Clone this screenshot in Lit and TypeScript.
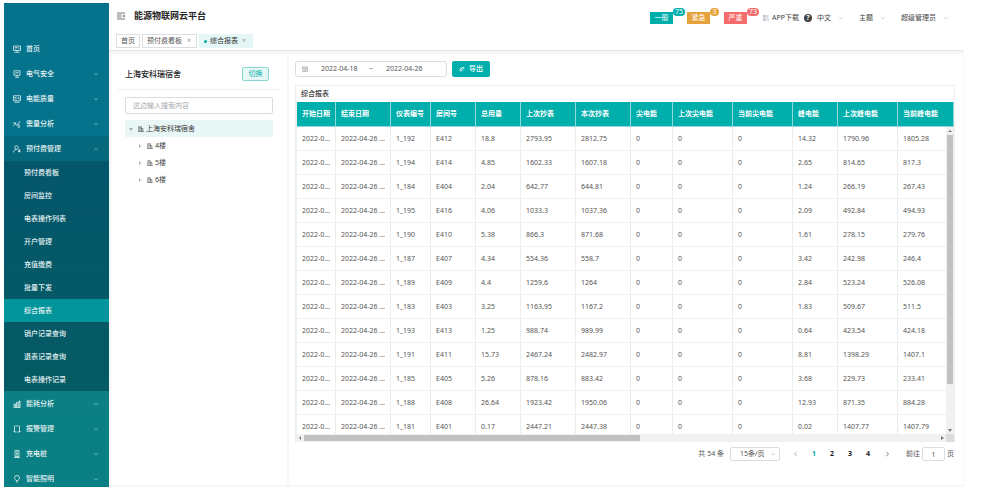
import { LitElement, html, css, svg } from "lit";
import { customElement, state } from "lit/decorators.js";
import { classMap } from "lit/directives/class-map.js";

const icons: Record<string, unknown> = {
  home: svg`<path d="M1 2h14v9H1zM3 14.500h10M8 11v3M4 5h5M4 8h3M11.500 5v3"/>`,
  safety: svg`<path d="M2 1.500h12v9H2zM8 10v4M4 14.500h8M5 7l2-3 2 3 2-3"/>`,
  quality: svg`<path d="M1 1.500h14v10H1zM3 14.500h10M3 5h4M3 8h4M9 8l2-3 2 3"/>`,
  demand: svg`<path d="M1 12l4-5 3 4 6-9M2 4a2 2 0 1 0 3 0M12 8v6M9 14h5"/>`,
  prepaid: svg`<circle cx="7" cy="5" r="3.500"/><path d="M1 15c0-4 3-6 6-6M10 10h5M10 13h5M12.500 9v6"/>`,
  energy: svg`<path d="M1 15h14M2 14V8h3v6M7 14V5h3v9M12 14V2h2v12"/>`,
  alarm: svg`<path d="M5 2H3v12h3M11 2h2v12h-3M1 13h3M12 13h3M6 2h4M7 14h2"/>`,
  charger: svg`<path d="M4 1h8v12H4zM2 15h12M6 4h4M6 7h4M6 10h4"/>`,
  light: svg`<path d="M8 1a5 5 0 0 0-5 5c0 2 2 3 3 5h4c1-2 3-3 3-5a5 5 0 0 0-5-5zM6 14h4"/>`,
  fold: svg`<path d="M0 2h16M0 6h9M0 10h9M0 14h16"/><path fill="currentColor" stroke="none" d="M15 5v6l-4-3z"/>`,
  qr: svg`<path d="M1 1h5v5H1zM10 1v6M13 1v3M1 10h5v5H1zM9 10h6M9 14h3M15 12v3"/>`,
  building: svg`<path d="M2 15V2h7v13M9 7h4v8M1 15h14M4 5h3M4 8h3M4 11h3"/>`,
  calendar: svg`<path d="M1 3h14v12H1zM1 7h14M5 1v3M11 1v3M4 10h8M4 12.500h8"/>`,
  clip: svg`<path stroke-width="2.500" d="M3 9l6-5c3-2 6 1 3 4l-6 5c-3 1-5-2-3-4l6-4"/>`,
  down: svg`<path d="M3 6l5 5 5-5"/>`,
  up: svg`<path d="M3 11l5-5 5 5"/>`,
};

const icon = (name: string, cls = "") =>
  html`<svg class="icon ${cls}" viewBox="0 0 16 16" aria-hidden="true">${icons[name]}</svg>`;

interface MenuEntry {
  label: string;
  icon: string;
  children?: string[];
  leaf?: boolean;
}

const MENU: MenuEntry[] = [
  { label: "首页", icon: "home", leaf: true },
  { label: "电气安全", icon: "safety" },
  { label: "电能质量", icon: "quality" },
  { label: "需量分析", icon: "demand" },
  {
    label: "预付费管理",
    icon: "prepaid",
    children: ["预付费看板", "房间监控", "电表操作列表", "开户管理", "充值缴费", "批量下发", "综合报表", "销户记录查询", "退表记录查询", "电表操作记录"],
  },
  { label: "能耗分析", icon: "energy" },
  { label: "报警管理", icon: "alarm" },
  { label: "充电桩", icon: "charger" },
  { label: "智能照明", icon: "light" },
];

const COLUMNS: [string, number][] = [
  ["开始日期", 39], ["结束日期", 55], ["仪表编号", 40], ["房间号", 45], ["总用量", 45], ["上次抄表", 55], ["本次抄表", 55],
  ["尖电能", 42], ["上次尖电能", 60], ["当前尖电能", 60], ["峰电能", 45], ["上次峰电能", 60], ["当前峰电能", 56],
];

const ROWS = [
  ["1_192", "E412", "18.8", "2793.95", "2812.75", "14.32", "1790.96", "1805.28"],
  ["1_194", "E414", "4.85", "1602.33", "1607.18", "2.65", "814.65", "817.3"],
  ["1_184", "E404", "2.04", "642.77", "644.81", "1.24", "266.19", "267.43"],
  ["1_195", "E416", "4.06", "1033.3", "1037.36", "2.09", "492.84", "494.93"],
  ["1_190", "E410", "5.38", "866.3", "871.68", "1.61", "278.15", "279.76"],
  ["1_187", "E407", "4.34", "554.36", "558.7", "3.42", "242.98", "246.4"],
  ["1_189", "E409", "4.4", "1259.6", "1264", "2.84", "523.24", "526.08"],
  ["1_183", "E403", "3.25", "1163.95", "1167.2", "1.83", "509.67", "511.5"],
  ["1_193", "E413", "1.25", "988.74", "989.99", "0.64", "423.54", "424.18"],
  ["1_191", "E411", "15.73", "2467.24", "2482.97", "8.81", "1398.29", "1407.1"],
  ["1_185", "E405", "5.26", "878.16", "883.42", "3.68", "229.73", "233.41"],
  ["1_188", "E408", "26.64", "1923.42", "1950.06", "12.93", "871.35", "884.28"],
  ["1_181", "E401", "0.17", "2447.21", "2447.38", "0.02", "1407.77", "1407.79"],
].map((r) => ["2022-0...", "2022-04-26 ...", ...r.slice(0, 5), "0", "0", "0", ...r.slice(5)]);

const base = css`
  * { box-sizing: border-box; }
  button, input, select { font: inherit; color: inherit; margin: 0; padding: 0; border: 0; background: none; border-radius: 0; min-width: 0; }
  a { color: inherit; text-decoration: none; }
  .icon { display: block; flex: none; width: 8px; height: 8px; fill: none; stroke: currentColor; stroke-width: 1.6; }
  .small { width: 6px; height: 6px; }
`;

@customElement("side-menu")
class SideMenu extends LitElement {
  static styles = [base, css`
    :host { display: block; overflow: hidden; padding-top: 33px; color: #e3f1f3; background: linear-gradient(#06738c, #06738c 30%, #0b8084 85%); }
    .entry { display: flex; align-items: center; gap: 5px; width: 100%; height: 25px; padding: 0 10px 0 9px; text-align: left; font-weight: 500; }
    .label { flex: 1; }
    .open { background: #05687d; }
    .arrow { width: 6px; height: 6px; opacity: 0.8; }
    .sub { background: linear-gradient(#04566b, #055b63); }
    .child { display: flex; align-items: center; height: 23px; padding-left: 20px; font-weight: 500; }
    .current { background: #02959b; }
  `];
  render() {
    return html`<nav>
      ${MENU.map((m) => html`
        <button class=${classMap({ entry: true, open: !!m.children })}>
          ${icon(m.icon)}<span class="label">${m.label}</span>
          ${m.leaf ? "" : icon(m.children ? "up" : "down", "arrow")}
        </button>
        ${m.children ? html`<div class="sub">${m.children.map((c) => html`
          <a href="#" class=${classMap({ child: true, current: c === "综合报表" })}>${c}</a>`)}</div>` : ""}
      `)}
    </nav>`;
  }
}

@customElement("top-bar")
class TopBar extends LitElement {
  static styles = [base, css`
    :host { display: block; height: 48px; background: #fff; border-bottom: 1px solid #e6e7e8; color: #444; }
    .bar { display: flex; align-items: center; height: 30px; padding: 0 15px 0 8px; }
    h1 { flex: 1; margin: 0 0 4px 9px; font-size: 9px; font-weight: 700; color: #222; white-space: nowrap; }
    .fold { margin-bottom: 4px; color: #555; }
    .alerts { display: flex; gap: 14px; margin-right: 16px; }
    .alert { position: relative; display: flex; align-items: center; justify-content: center; width: 23px; height: 12px; color: #fff; }
    .count { position: absolute; left: 23px; top: -4px; min-width: 9px; height: 8px; padding: 0 2px; border-radius: 4px; line-height: 8px; text-align: center; }
    .general, .general .count { background: #00aeab; }
    .urgent, .urgent .count { background: #e6a23c; }
    .severe, .severe .count { background: #f56c6c; }
    .app { display: flex; align-items: center; gap: 3px; }
    .app .icon { color: #8a93a5; }
    .help { width: 8px; height: 8px; margin: 0 5px; border-radius: 50%; background: #444; color: #fff; font-weight: 700; line-height: 8px; text-align: center; }
    .drop { display: flex; align-items: center; gap: 7px; margin-right: 15px; }
    .drop:last-child { margin-right: 0; }
    .drop .icon { color: #b5b9c2; }
    .tabs { display: flex; gap: 2px; padding: 1px 7px; }
    .tab { display: flex; align-items: center; gap: 4px; height: 14px; padding: 0 4px; border: 1px solid #dcdfe2; color: #555; }
    .close { color: #999; padding: 0 1px; }
    .active { border-color: #e4f6f5; background: #e4f6f5; color: #333; gap: 3px; padding: 0 5px 0 4px; }
    .dot { width: 3px; height: 3px; border-radius: 50%; background: #00aeab; }
  `];
  render() {
    const alerts = [["一般", "75", "general"], ["紧急", "3", "urgent"], ["严重", "73", "severe"]];
    return html`
      <div class="bar">
        ${icon("fold", "fold")}
        <h1>能源物联网云平台</h1>
        <div class="alerts">${alerts.map(([t, n, c]) => html`<button class="alert ${c}">${t}<span class="count">${n}</span></button>`)}</div>
        <a class="app" href="#">${icon("qr", "small")}APP下载</a>
        <button class="help" aria-label="帮助">?</button>
        ${["中文", "主题", "超级管理员"].map((t) => html`<button class="drop">${t}${icon("down", "small")}</button>`)}
      </div>
      <nav class="tabs">
        <a class="tab" href="#">首页</a>
        <a class="tab" href="#">预付费看板<span class="close">×</span></a>
        <a class="tab active" href="#"><span class="dot"></span>综合报表<span class="close">×</span></a>
      </nav>`;
  }
}

@customElement("site-tree")
class SiteTree extends LitElement {
  static styles = [base, css`
    :host { display: block; padding: 0 7px; background: #fff; color: #444; }
    .head { display: flex; align-items: center; justify-content: space-between; height: 36px; padding: 5px 11px 0 7px; border-bottom: 1px solid #eceeef; }
    h2 { margin: 0; font-size: 8px; font-weight: 500; color: #222; }
    .switch { width: 27px; height: 14px; border: 1px solid #86d6d3; border-radius: 2px; background: #e6f7f6; color: #00aeab; }
    .body { padding: 7px; }
    .search { display: block; width: 100%; height: 17px; padding: 0 7px; border: 1px solid #d9dce1; border-radius: 2px; }
    .search::placeholder { color: #a5a8ad; opacity: 1; }
    ul { margin: 6px 0 0; padding: 0; list-style: none; }
    .node { display: flex; align-items: center; gap: 2px; height: 17px; padding-left: 13px; }
    .root { padding-left: 4px; background: #e8f7f6; color: #333; }
    .tri { width: 4px; height: 4px; fill: #aaa; margin-right: 3px; }
  `];
  render() {
    return html`
      <div class="head"><h2>上海安科瑞宿舍</h2><button class="switch">切换</button></div>
      <div class="body">
        <input class="search" aria-label="搜索" placeholder="这边输入搜索内容" />
        <ul>
          <li class="node root"><svg class="tri" viewBox="0 0 4 4"><path d="M0 1h4L2 4z"/></svg>${icon("building", "small")}上海安科瑞宿舍</li>
          ${["4楼", "5楼", "6楼"].map((t) => html`<li class="node"><svg class="tri" viewBox="0 0 4 4"><path d="M1 0v4l2-2z"/></svg>${icon("building", "small")}${t}</li>`)}
        </ul>
      </div>`;
  }
}

@customElement("report-panel")
class ReportPanel extends LitElement {
  @state() page = 1;
  static styles = [base, css`
    :host { display: block; padding: 7px 8px 0 6px; background: #fff; color: #555; min-width: 0; }
    .tools { display: flex; gap: 5px; }
    .range { display: flex; align-items: center; width: 152px; height: 16px; padding-left: 6px; border: 1px solid #d9dce1; border-radius: 3px; }
    .range .icon { color: #999; margin-right: 13px; }
    .range input { width: 39px; }
    .tilde { width: 26px; padding-left: 9px; }
    .export { display: flex; align-items: center; justify-content: center; gap: 4px; width: 38px; height: 16px; border-radius: 2px; background: #00aeab; color: #fff; font-weight: 500; }
    .card { margin-top: 8px; border: 1px solid #eceeef; border-bottom: 0; }
    h3 { margin: 0; height: 16px; padding-left: 5px; font-size: 7px; line-height: 15px; font-weight: 500; color: #333; }
    .view { position: relative; height: 332px; overflow: hidden; border-left: 1px solid #eceeef; }
    table { width: 100%; table-layout: fixed; border-collapse: separate; border-spacing: 0; }
    th, td { padding: 0 0 0 5px; border-right: 1px solid #eaecee; border-bottom: 1px solid #eff0f2; text-align: left; white-space: nowrap; overflow: hidden; line-height: 10px; }
    th { height: 25px; background: #00aeab; color: #fff; font-weight: 700; border-color: #8fdad8; }
    td { height: 24px; }
    .vbar { position: absolute; top: 25px; right: 0; bottom: 0; width: 8px; display: flex; flex-direction: column; align-items: center; background: #f1f1f1; }
    .vthumb { width: 6px; height: 81%; background: #c1c1c1; }
    .btn { flex: none; width: 8px; height: 8px; fill: #777; }
    .grow { flex: 1; }
    .hbar { display: flex; align-items: center; height: 8px; background: #f1f1f1; }
    .hthumb { width: 51%; height: 6px; background: #c1c1c1; }
    .corner { width: 8px; height: 8px; background: #dcdcdc; }
    .pager { display: flex; align-items: center; justify-content: flex-end; height: 14px; margin-top: 5px; padding-right: 1px; white-space: nowrap; }
    .size { position: relative; width: 50px; height: 14px; margin: 0 7px 0 6px; }
    .size select { width: 100%; height: 14px; padding-left: 9px; border: 1px solid #d9dce1; border-radius: 2px; appearance: none; }
    .size .icon { position: absolute; right: 4px; top: 4px; color: #aaa; pointer-events: none; }
    .page { width: 18px; text-align: center; font-weight: 700; color: #222; }
    .page.on { color: #00aeab; }
    .step { display: flex; justify-content: center; width: 20px; color: #333; }
    .prev { color: #888; width: 18px; }
    .jump { display: flex; align-items: center; margin-left: 9px; }
    .jump input { width: 23px; height: 14px; margin: 0 2px; border: 1px solid #d9dce1; border-radius: 2px; text-align: center; }
  `];
  render() {
    return html`
      <div class="tools">
        <div class="range">${icon("calendar", "small")}<input aria-label="开始日期" value="2022-04-18" /><span class="tilde">~</span><input aria-label="结束日期" value="2022-04-26" /></div>
        <button class="export">${icon("clip", "small")}导出</button>
      </div>
      <section class="card">
        <h3>综合报表</h3>
        <div class="view">
          <table>
            <colgroup>${COLUMNS.map(([, w]) => html`<col style="width:${w}px" />`)}</colgroup>
            <thead><tr>${COLUMNS.map(([t]) => html`<th>${t}</th>`)}</tr></thead>
            <tbody>${ROWS.map((r) => html`<tr>${r.map((v) => html`<td>${v}</td>`)}</tr>`)}</tbody>
          </table>
          <div class="vbar">
            <svg class="btn" viewBox="0 0 8 8"><path d="M2 5h4L4 3z"/></svg>
            <div class="vthumb"></div><div class="grow"></div>
            <svg class="btn" viewBox="0 0 8 8"><path d="M2 3h4L4 6z"/></svg>
          </div>
        </div>
        <div class="hbar">
          <svg class="btn" viewBox="0 0 8 8"><path d="M5 2v4L3 4z"/></svg>
          <div class="hthumb"></div><div class="grow"></div>
          <svg class="btn" viewBox="0 0 8 8"><path d="M3 2v4l3-2z"/></svg>
          <div class="corner"></div>
        </div>
      </section>
      <div class="pager">
        <span>共 54 条</span>
        <div class="size"><select aria-label="每页条数"><option>15条/页</option></select>${icon("down", "small")}</div>
        <button class="step prev" aria-label="上一页"><svg class="icon small" viewBox="0 0 16 16"><path d="M10 2L4 8l6 6"/></svg></button>
        ${[1, 2, 3, 4].map((n) => html`<button class=${classMap({ page: true, on: n === this.page })} @click=${() => (this.page = n)}>${n}</button>`)}
        <button class="step" aria-label="下一页"><svg class="icon small" viewBox="0 0 16 16"><path d="M6 2l6 6-6 6"/></svg></button>
        <label class="jump">前往<input .value=${String(this.page)} />页</label>
      </div>`;
  }
}

@customElement("app-root")
class AppRoot extends LitElement {
  static styles = [base, css`
    :host { display: grid; grid-template-columns: 105px minmax(0, 1fr); height: 100vh; box-sizing: border-box; overflow: hidden; padding: 3px 43px 0 4px; background: #fff; font: 7px/10px "Noto Sans", "Noto Sans CJK SC", sans-serif; }
    .main { display: flex; flex-direction: column; min-height: 0; background: #f5f6f6; }
    .content { flex: 1; display: grid; grid-template-columns: 176px minmax(0, 1fr); gap: 2px; padding: 3px 1px 2px 2px; }
  `];
  render() {
    return html`
      <side-menu></side-menu>
      <div class="main">
        <top-bar></top-bar>
        <main class="content"><site-tree></site-tree><report-panel></report-panel></main>
      </div>`;
  }
}
